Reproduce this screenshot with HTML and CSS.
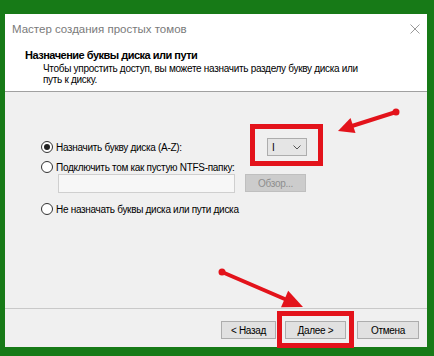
FILE: index.html
```html
<!DOCTYPE html>
<html lang="ru">
<head>
    <meta charset="UTF-8">
    <title>Мастер создания простых томов</title>
    <link rel="stylesheet" href="styles.css">
</head>
<body>

<div class="window">
    <!-- заголовок окна -->
    <div class="titlebar">
        <span class="title">Мастер создания простых томов</span>
        <svg class="close" width="10" height="10" viewBox="0 0 10 10">
            <path d="M0.5 0.5 L9.5 9.5 M9.5 0.5 L0.5 9.5" stroke="#9a9a9a" stroke-width="1" fill="none"/>
        </svg>
    </div>

    <!-- шапка мастера -->
    <div class="header">
        <div class="heading">Назначение буквы диска или пути</div>
        <div class="desc">Чтобы упростить доступ, вы можете назначить разделу букву диска или<br>путь к диску.</div>
    </div>

    <!-- варианты -->
    <div class="content">
        <div class="row first">
            <label class="radio-label"><span class="radio checked"></span>Назначить букву диска (A-Z):</label>
            <div class="select">
                <span>I</span>
                <svg width="8" height="5" viewBox="0 0 8 5">
                    <path d="M0.5 0.5 L4 4 L7.5 0.5" stroke="#555" stroke-width="1" fill="none"/>
                </svg>
            </div>
        </div>
        <div class="row second">
            <label class="radio-label"><span class="radio"></span>Подключить том как пустую NTFS-папку:</label>
        </div>
        <div class="path-row">
            <div class="path-input"></div>
            <div class="btn disabled">Обзор...</div>
        </div>
        <div class="row third">
            <label class="radio-label"><span class="radio"></span>Не назначать буквы диска или пути диска</label>
        </div>
    </div>

    <!-- кнопки -->
    <div class="footer">
        <div class="btn back">&lt; Назад</div>
        <div class="btn next">Далее &gt;</div>
        <div class="btn cancel">Отмена</div>
    </div>
</div>

<!-- пометки поверх скриншота -->
<svg class="marks" width="434" height="356" viewBox="0 0 434 356">
    <rect x="252.5" y="126.5" width="68" height="37" fill="none" stroke="#e3131b" stroke-width="5"/>
    <rect x="279.5" y="313.5" width="72" height="32" fill="none" stroke="#e3131b" stroke-width="5"/>

    <line x1="396" y1="112" x2="352" y2="126" stroke="#e3131b" stroke-width="4" stroke-linecap="round"/>
    <circle cx="396" cy="112" r="3.5" fill="#e3131b"/>
    <polygon points="338,131 355.5,133 350.5,118" fill="#e3131b"/>

    <line x1="222" y1="272" x2="287" y2="300" stroke="#e3131b" stroke-width="4" stroke-linecap="round"/>
    <circle cx="222" cy="272" r="3.5" fill="#e3131b"/>
    <polygon points="303,307 281,307.3 288.2,290.7" fill="#e3131b"/>
</svg>

</body>
</html>
```

FILE: styles.css
```css
body {
    margin: 0;
    padding: 14px 7px 9px 5px;
    background: #177a17;
    font-family: "Liberation Sans", Arial, sans-serif;
    font-size: 10px;
    letter-spacing: -0.3px;
    color: #000;
    position: relative;
}
.window {
    width: 422px;
    height: 333px;
    background: #fff;
    display: flex;
    flex-direction: column;
}
.titlebar {
    height: 30px;
    display: flex;
    align-items: center;
    justify-content: space-between;
    padding: 0 7px 0 7px;
}
.title {
    color: #7a7a7a;
    font-size: 11.5px;
    letter-spacing: 0;
}
.header {
    height: 47px;
    padding-left: 20px;
    border-bottom: 1px solid #a0a0a0;
}
.heading {
    font-weight: bold;
    font-size: 11px;
    letter-spacing: -0.5px;
    line-height: 13px;
    padding-top: 5px;
}
.desc {
    padding-left: 18px;
    line-height: 10.5px;
    padding-top: 2px;
}
.content {
    flex: 1;
    background: #f0f0f0;
    padding: 46px 0 0 36px;
}
.row {
    height: 16px;
    display: flex;
    align-items: center;
}
.row.first {
    display: grid;
    grid-template-columns: 226px 40px;
    align-items: center;
}
.row.second {
    margin-top: 5px;
}
.row.third {
    margin-top: 8px;
}
.radio-label {
    display: flex;
    align-items: center;
}
.radio {
    width: 10px;
    height: 10px;
    border: 1px solid #333;
    border-radius: 50%;
    background: #fff;
    margin-right: 3px;
    position: relative;
}
.radio.checked::after {
    content: "";
    position: absolute;
    left: 2px;
    top: 2px;
    width: 6px;
    height: 6px;
    border-radius: 50%;
    background: #222;
}
.select {
    height: 16px;
    border: 1px solid #adadad;
    background: #e5e5e5;
    display: flex;
    align-items: center;
    justify-content: space-between;
    padding: 0 5px 0 4px;
}
.path-row {
    display: flex;
    margin: -1px 0 0 17px;
}
.path-input {
    width: 175px;
    height: 17px;
    border: 1px solid #cfcfcf;
    background: #f7f7f7;
}
.btn {
    height: 16px;
    border: 1px solid #adadad;
    background: #e1e1e1;
    display: flex;
    align-items: center;
    justify-content: center;
}
.btn.disabled {
    width: 59px;
    margin-left: 10px;
    border-color: #bfbfbf;
    background: #cccccc;
    color: #8e8e8e;
}
.footer {
    height: 39px;
    border-top: 1px solid #c9c9c9;
    background: #f0f0f0;
    display: flex;
    justify-content: flex-end;
    align-items: flex-start;
    padding: 12px 8px 0 0;
    box-sizing: border-box;
}
.back {
    width: 53px;
}
.next {
    width: 59px;
    margin-left: 9px;
}
.cancel {
    width: 60px;
    margin-left: 11px;
}
.marks {
    position: absolute;
    top: 0;
    left: 0;
    pointer-events: none;
}
```
